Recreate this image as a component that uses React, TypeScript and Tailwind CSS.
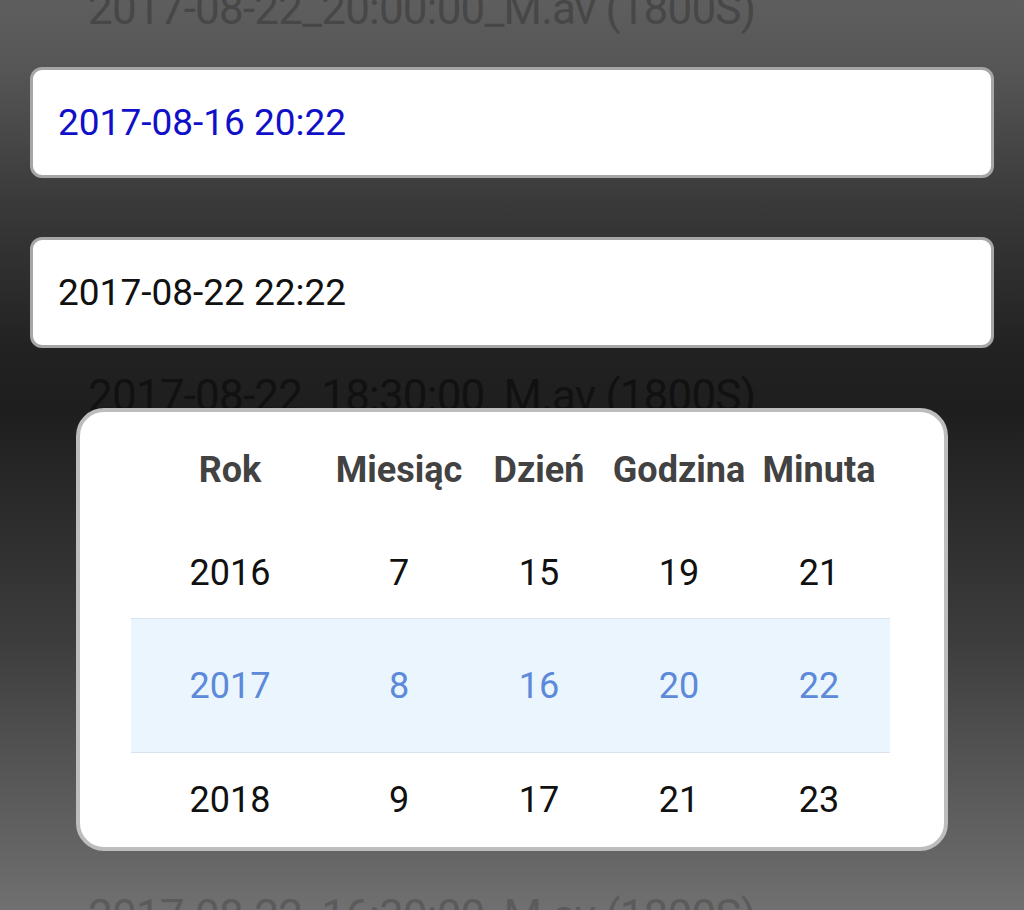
import React from 'react';

type Column = { title: string; values: [string, string, string]; width: string };

const columns: Column[] = [
  { title: 'Rok', values: ['2016', '2017', '2018'], width: 'w-[198px]' },
  { title: 'Miesiąc', values: ['7', '8', '9'], width: 'w-[140px]' },
  { title: 'Dzień', values: ['15', '16', '17'], width: 'w-[140px]' },
  { title: 'Godzina', values: ['19', '20', '21'], width: 'w-[140px]' },
  { title: 'Minuta', values: ['21', '22', '23'], width: 'w-[140px]' },
];

const font = { fontFamily: 'Roboto, "Noto Sans", sans-serif' };

function PickerRow({ index, className, cellClass }: { index: 0 | 1 | 2; className: string; cellClass: string }) {
  return (
    <div className={`flex ${className}`}>
      {columns.map((col) => (
        <div key={col.title} className={`${col.width} flex items-center justify-center ${cellClass}`}>
          {col.values[index]}
        </div>
      ))}
    </div>
  );
}

export default function App() {
  return (
    <div
      className="relative h-[910px] w-[1024px] overflow-hidden bg-[linear-gradient(180deg,#5e5e5e_0%,#555_8%,#3a3a3a_22%,#222_38%,#1e1e1e_45%,#3c3c3c_70%,#707070_100%)]"
      style={font}
    >
      {/* list behind the dialog */}
      <div className="pl-[88px] text-[44px] leading-none tracking-[-0.8px] whitespace-nowrap">
        <div className="mt-[-13px] h-[44px] text-[#474747]">2017-08-22_20:00:00_M.av (1800S)</div>
        <div className="mt-[343px] h-[44px] text-[#111]">2017-08-22_18:30:00_M.av (1800S)</div>
        <div className="mt-[476px] h-[44px] text-[#5b5b5b]">2017-08-22_16:30:00_M.av (1800S)</div>
      </div>

      <div className="absolute inset-0 px-[30px] pt-[67px]">
        <div className="flex h-[111px] items-center rounded-[12px] border-[3px] border-[#a6a6a6] bg-white pl-[25px] text-[37px] text-[#1010c8]">
          2017-08-16 20:22
        </div>
        <div className="mt-[59px] flex h-[111px] items-center rounded-[12px] border-[3px] border-[#a6a6a6] bg-white pl-[25px] text-[37px] text-[#111]">
          2017-08-22 22:22
        </div>

        <div className="mx-[46px] mt-[60px] rounded-[28px] border-4 border-[#bdbdbd] bg-white pl-[51px]">
          <div className="flex h-[116px]">
            {columns.map((col) => (
              <div
                key={col.title}
                className={`${col.width} flex items-center justify-center text-[36px] font-bold text-[#424242]`}
              >
                {col.title}
              </div>
            ))}
          </div>
          <PickerRow index={0} className="h-[90px]" cellClass="text-[36px] text-[#111]" />
          <PickerRow
            index={1}
            className="h-[135px] w-[759px] border-y border-[#d9e1ea] bg-[#eaf5fe]"
            cellClass="text-[36px] text-[#5c89d9]"
          />
          <PickerRow index={2} className="h-[94px]" cellClass="text-[36px] text-[#111]" />
        </div>
      </div>
    </div>
  );
}
